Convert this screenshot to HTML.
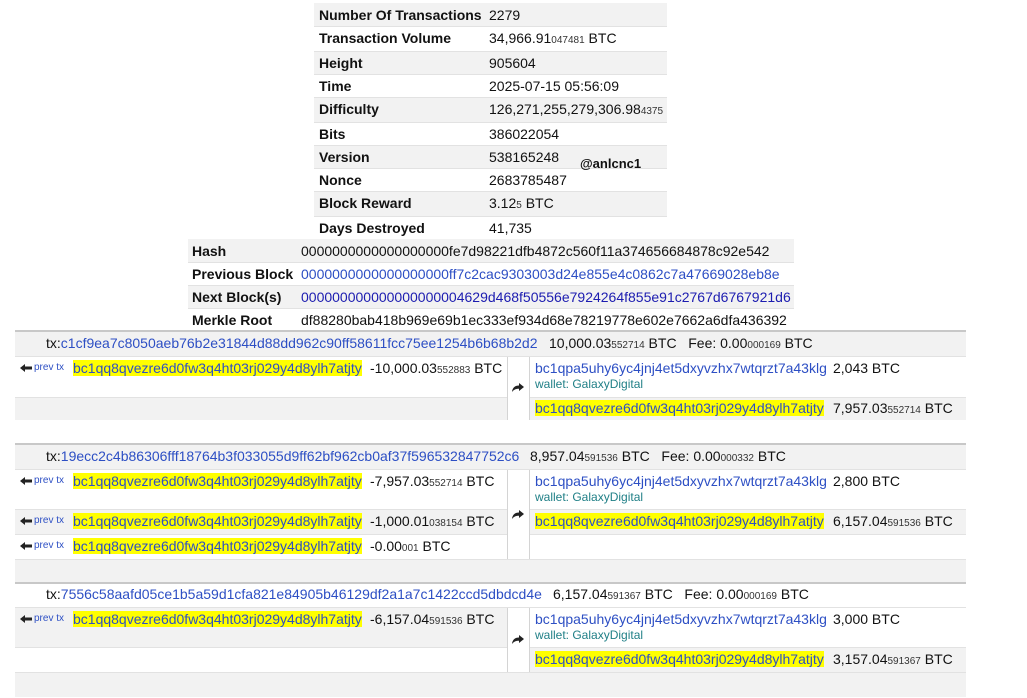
<!DOCTYPE html>
<html><head><meta charset="utf-8"><style>
body{margin:0;width:1027px;height:698px;background:#fff;position:relative;overflow:hidden;font-family:"Liberation Sans",Arial,sans-serif;color:#111}
.r{position:absolute}
.g{background:#f2f2f2}
.w{background:#fff}
.bt{border-top:1px solid #e2e2e2}
.hb{border-top:2px solid #c8c8c8}
.t{position:absolute;white-space:nowrap;font-size:14px;line-height:16px}
.b{font-weight:bold}
.s{font-size:10px;color:#333}
.l{color:#2d4fc4}
.l2{color:#1c1cb0}
.hl{background:#ffff00;color:#2d4fc4}
.pv{font-size:10px;color:#2d4fc4}
.wl{font-size:12px;color:#1f7f86}
.vl{position:absolute;width:1px;background:#d4d4d4}
.ar{position:absolute;width:12px;height:10px}
.tx .t{margin-top:-1px}
</style></head><body>

<div class="r g" style="left:314px;top:3px;width:353px;height:23px"></div>
<div class="r w bt" style="left:314px;top:26px;width:353px;height:24px"></div>
<div class="r g bt" style="left:314px;top:51px;width:353px;height:22px"></div>
<div class="r w bt" style="left:314px;top:74px;width:353px;height:22px"></div>
<div class="r g bt" style="left:314px;top:97px;width:353px;height:24px"></div>
<div class="r w bt" style="left:314px;top:122px;width:353px;height:22px"></div>
<div class="r g bt" style="left:314px;top:145px;width:353px;height:22px"></div>
<div class="r w bt" style="left:314px;top:168px;width:353px;height:22px"></div>
<div class="r g bt" style="left:314px;top:191px;width:353px;height:24px"></div>
<div class="r w bt" style="left:314px;top:216px;width:353px;height:22px"></div>

<div class="t b" style="left:319px;top:7px">Number Of Transactions</div><div class="t" style="left:489px;top:7px">2279</div>
<div class="t b" style="left:319px;top:30px">Transaction Volume</div><div class="t" style="left:489px;top:30px">34,966.91<span class="s">047481</span> BTC</div>
<div class="t b" style="left:319px;top:55px">Height</div><div class="t" style="left:489px;top:55px">905604</div>
<div class="t b" style="left:319px;top:78px">Time</div><div class="t" style="left:489px;top:78px">2025-07-15 05:56:09</div>
<div class="t b" style="left:319px;top:101px">Difficulty</div><div class="t" style="left:489px;top:101px">126,271,255,279,306.98<span class="s">4375</span></div>
<div class="t b" style="left:319px;top:126px">Bits</div><div class="t" style="left:489px;top:126px">386022054</div>
<div class="t b" style="left:319px;top:149px">Version</div><div class="t" style="left:489px;top:149px">538165248</div>
<div class="t b" style="left:580px;top:156px;font-size:13px">@anlcnc1</div>
<div class="t b" style="left:319px;top:172px">Nonce</div><div class="t" style="left:489px;top:172px">2683785487</div>
<div class="t b" style="left:319px;top:195px">Block Reward</div><div class="t" style="left:489px;top:195px">3.12<span class="s">5</span> BTC</div>
<div class="t b" style="left:319px;top:220px">Days Destroyed</div><div class="t" style="left:489px;top:220px">41,735</div>

<div class="r g" style="left:188px;top:239px;width:606px;height:23px"></div>
<div class="r w bt" style="left:188px;top:262px;width:606px;height:22px"></div>
<div class="r g bt" style="left:188px;top:285px;width:606px;height:22px"></div>
<div class="r w bt" style="left:188px;top:308px;width:606px;height:22px"></div>
<div class="t b" style="left:192px;top:243px">Hash</div><div class="t" style="left:301px;top:243px">0000000000000000000fe7d98221dfb4872c560f11a374656684878c92e542</div>
<div class="t b" style="left:192px;top:266px">Previous Block</div><div class="t l" style="left:301px;top:266px">0000000000000000000ff7c2cac9303003d24e855e4c0862c7a47669028eb8e</div>
<div class="t b" style="left:192px;top:289px">Next Block(s)</div><div class="t l2" style="left:301px;top:289px">000000000000000000004629d468f50556e7924264f855e91c2767d6767921d6</div>
<div class="t b" style="left:192px;top:312px">Merkle Root</div><div class="t" style="left:301px;top:312px">df88280bab418b969e69b1ec333ef934d68e78219778e602e7662a6dfa436392</div>

<div class="r g hb" style="left:15px;top:330px;width:951px;height:24px"></div>
<div class="r w bt" style="left:15px;top:356px;width:951px;height:40px"></div>
<div class="r g bt" style="left:15px;top:397px;width:951px;height:22px"></div>
<div class="r w" style="left:15px;top:420px;width:951px;height:23px"></div>
<div class="r g hb" style="left:15px;top:443px;width:951px;height:24px"></div>
<div class="r w bt" style="left:15px;top:469px;width:951px;height:39px"></div>
<div class="r g bt" style="left:15px;top:509px;width:951px;height:24px"></div>
<div class="r w bt" style="left:15px;top:534px;width:951px;height:24px"></div>
<div class="r g bt" style="left:15px;top:559px;width:951px;height:23px"></div>
<div class="r w hb" style="left:15px;top:582px;width:951px;height:23px"></div>
<div class="r g bt" style="left:15px;top:607px;width:951px;height:39px"></div>
<div class="r w bt" style="left:15px;top:647px;width:951px;height:24px"></div>
<div class="r g bt" style="left:15px;top:672px;width:951px;height:24px"></div>
<div class="r w" style="left:507px;top:357px;width:22px;height:63px"></div>
<div class="r w" style="left:507px;top:470px;width:22px;height:89px"></div>
<div class="r w" style="left:507px;top:608px;width:22px;height:64px"></div>
<div class="r w" style="left:529px;top:357px;width:437px;height:40px"></div>
<div class="r g bt" style="left:529px;top:397px;width:437px;height:22px"></div>
<div class="r w" style="left:529px;top:470px;width:437px;height:39px"></div>
<div class="r g bt" style="left:529px;top:509px;width:437px;height:24px"></div>
<div class="r w bt" style="left:529px;top:534px;width:437px;height:24px"></div>
<div class="r w" style="left:529px;top:608px;width:437px;height:39px"></div>
<div class="r g bt" style="left:529px;top:647px;width:437px;height:24px"></div>
<div class="vl" style="left:507px;top:357px;height:63px"></div><div class="vl" style="left:529px;top:357px;height:63px"></div>
<div class="vl" style="left:507px;top:470px;height:89px"></div><div class="vl" style="left:529px;top:470px;height:89px"></div>
<div class="vl" style="left:507px;top:608px;height:64px"></div><div class="vl" style="left:529px;top:608px;height:64px"></div>

<svg width="0" height="0" style="position:absolute"><defs>
<symbol id="la" viewBox="0 0 12 10"><path d="M0 5 L5 1 L5 3.5 L12 3.5 L12 6.5 L5 6.5 L5 9 Z" fill="#222"/></symbol>
<symbol id="ra" viewBox="0 0 12 10"><path d="M12 4 L7 0 L7 2.5 C3 2.5 0.5 4.5 0 9 C2 6.5 4 5.8 7 5.8 L7 8 Z" fill="#222"/></symbol>
</defs></svg>

<div class="tx">
<div class="t" style="left:46px;top:336px">tx:<span class="l">c1cf9ea7c8050aeb76b2e31844d88dd962c90ff58611fcc75ee1254b6b68b2d2</span></div>
<div class="t" style="left:549px;top:336px">10,000.03<span class="s">552714</span> BTC &nbsp;&nbsp;Fee: 0.00<span class="s">000169</span> BTC</div>
<svg class="ar" style="left:20px;top:363px"><use href="#la"/></svg><div class="t pv" style="left:34px;top:361px">prev tx</div>
<div class="t" style="left:73px;top:361px"><span class="hl">bc1qq8qvezre6d0fw3q4ht03rj029y4d8ylh7atjty</span></div>
<div class="t" style="left:370px;top:361px">-10,000.03<span class="s">552883</span> BTC</div>
<svg class="ar" style="left:512px;top:383px"><use href="#ra"/></svg>
<div class="t l" style="left:535px;top:361px">bc1qpa5uhy6yc4jnj4et5dxyvzhx7wtqrzt7a43klg</div><div class="t" style="left:833px;top:361px">2,043 BTC</div>
<div class="t wl" style="left:535px;top:377px">wallet: GalaxyDigital</div>
<div class="t" style="left:535px;top:401px"><span class="hl">bc1qq8qvezre6d0fw3q4ht03rj029y4d8ylh7atjty</span></div><div class="t" style="left:833px;top:401px">7,957.03<span class="s">552714</span> BTC</div>

<div class="t" style="left:46px;top:449px">tx:<span class="l">19ecc2c4b86306fff18764b3f033055d9ff62bf962cb0af37f596532847752c6</span></div>
<div class="t" style="left:530px;top:449px">8,957.04<span class="s">591536</span> BTC &nbsp;&nbsp;Fee: 0.00<span class="s">000332</span> BTC</div>
<svg class="ar" style="left:20px;top:476px"><use href="#la"/></svg><div class="t pv" style="left:34px;top:474px">prev tx</div>
<div class="t" style="left:73px;top:474px"><span class="hl">bc1qq8qvezre6d0fw3q4ht03rj029y4d8ylh7atjty</span></div>
<div class="t" style="left:370px;top:474px">-7,957.03<span class="s">552714</span> BTC</div>
<svg class="ar" style="left:20px;top:516px"><use href="#la"/></svg><div class="t pv" style="left:34px;top:514px">prev tx</div>
<div class="t" style="left:73px;top:514px"><span class="hl">bc1qq8qvezre6d0fw3q4ht03rj029y4d8ylh7atjty</span></div>
<div class="t" style="left:370px;top:514px">-1,000.01<span class="s">038154</span> BTC</div>
<svg class="ar" style="left:20px;top:541px"><use href="#la"/></svg><div class="t pv" style="left:34px;top:539px">prev tx</div>
<div class="t" style="left:73px;top:539px"><span class="hl">bc1qq8qvezre6d0fw3q4ht03rj029y4d8ylh7atjty</span></div>
<div class="t" style="left:370px;top:539px">-0.00<span class="s">001</span> BTC</div>
<svg class="ar" style="left:512px;top:510px"><use href="#ra"/></svg>
<div class="t l" style="left:535px;top:474px">bc1qpa5uhy6yc4jnj4et5dxyvzhx7wtqrzt7a43klg</div><div class="t" style="left:833px;top:474px">2,800 BTC</div>
<div class="t wl" style="left:535px;top:490px">wallet: GalaxyDigital</div>
<div class="t" style="left:535px;top:514px"><span class="hl">bc1qq8qvezre6d0fw3q4ht03rj029y4d8ylh7atjty</span></div><div class="t" style="left:833px;top:514px">6,157.04<span class="s">591536</span> BTC</div>

<div class="t" style="left:46px;top:587px">tx:<span class="l">7556c58aafd05ce1b5a59d1cfa821e84905b46129df2a1a7c1422ccd5dbdcd4e</span></div>
<div class="t" style="left:553px;top:587px">6,157.04<span class="s">591367</span> BTC &nbsp;&nbsp;Fee: 0.00<span class="s">000169</span> BTC</div>
<svg class="ar" style="left:20px;top:614px"><use href="#la"/></svg><div class="t pv" style="left:34px;top:612px">prev tx</div>
<div class="t" style="left:73px;top:612px"><span class="hl">bc1qq8qvezre6d0fw3q4ht03rj029y4d8ylh7atjty</span></div>
<div class="t" style="left:370px;top:612px">-6,157.04<span class="s">591536</span> BTC</div>
<svg class="ar" style="left:512px;top:635px"><use href="#ra"/></svg>
<div class="t l" style="left:535px;top:612px">bc1qpa5uhy6yc4jnj4et5dxyvzhx7wtqrzt7a43klg</div><div class="t" style="left:833px;top:612px">3,000 BTC</div>
<div class="t wl" style="left:535px;top:628px">wallet: GalaxyDigital</div>
<div class="t" style="left:535px;top:652px"><span class="hl">bc1qq8qvezre6d0fw3q4ht03rj029y4d8ylh7atjty</span></div><div class="t" style="left:833px;top:652px">3,157.04<span class="s">591367</span> BTC</div>
</div>

</body></html>
